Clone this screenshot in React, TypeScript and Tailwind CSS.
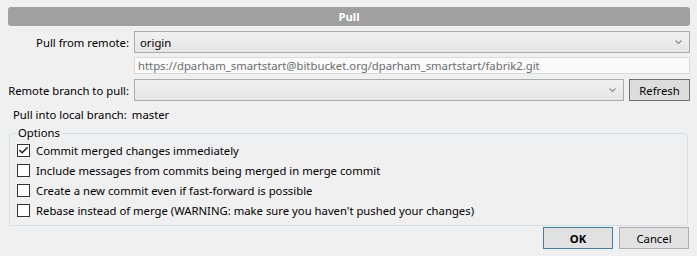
import { Check } from "lucide-react";

const font = { fontFamily: '"Noto Sans", "Liberation Sans", sans-serif' };

function Chevron() {
  return (
    <svg width="9" height="6" viewBox="0 0 9 6" className="shrink-0">
      <path d="M1.5 1.5 L4.5 4.5 L7.5 1.5" fill="none" stroke="#8a8a8a" strokeWidth="1.1" />
    </svg>
  );
}

function Combo({ value }: { value?: string }) {
  return (
    <div className="flex h-[22px] flex-1 items-center justify-between border border-[#acacac] bg-gradient-to-b from-[#f2f2f2] to-[#e5e5e5] pl-[5px] pr-[6px]">
      <span className="text-black">{value}</span>
      <Chevron />
    </div>
  );
}

function CheckRow({ label, checked }: { label: string; checked?: boolean }) {
  return (
    <div className="flex h-[20px] items-center gap-[6px]">
      <div className="flex h-[13px] w-[13px] shrink-0 items-center justify-center border border-[#333] bg-white">
        {checked && <Check className="h-[11px] w-[11px] text-[#222]" strokeWidth={3.5} />}
      </div>
      <span className="whitespace-nowrap">{label}</span>
    </div>
  );
}

export default function App() {
  return (
    <div
      className="h-[256px] w-[697px] overflow-hidden bg-[#f0f0f0] pl-[8px] pr-[7px] pt-[7px] text-[11.3px] leading-[15px] text-black"
      style={font}
    >
      {/* Header */}
      <div className="flex h-[19px] items-center justify-center rounded-[3px] bg-[#a0a0a0] font-bold text-white">
        Pull
      </div>

      {/* Fields */}
      <div className="mt-[5px] grid grid-cols-[121px_1fr] items-center gap-x-[5px]">
        <div className="whitespace-nowrap text-right">Pull from remote:</div>
        <Combo value="origin" />

        <div />
        <div className="mt-[4px] flex h-[17px] items-center border border-[#dadada] bg-[#fafafa] pl-[3px] text-[#6d6d6d]">
          https://dparham_smartstart@bitbucket.org/dparham_smartstart/fabrik2.git
        </div>

        <div className="mt-[5px] whitespace-nowrap text-right">Remote branch to pull:</div>
        <div className="mt-[5px] flex gap-[5px]">
          <Combo />
          <button className="h-[22px] w-[61px] border border-[#707070] bg-[#dddddd]">Refresh</button>
        </div>
      </div>

      <div className="mt-[5px] flex h-[17px] items-center pl-[5px]">
        <span>Pull into local branch:</span>
        <span className="ml-[5px]">master</span>
      </div>

      {/* Options group */}
      <div className="relative mr-[2px] ml-[1px] mt-[10px] h-[93px] rounded-[3px] border border-[#d5dfe5] px-[7px] pt-[6px]">
        <span className="absolute -top-[9px] left-[6px] bg-[#f0f0f0] px-[2px]">Options</span>
        <CheckRow label="Commit merged changes immediately" checked />
        <CheckRow label="Include messages from commits being merged in merge commit" />
        <CheckRow label="Create a new commit even if fast-forward is possible" />
        <CheckRow label="Rebase instead of merge (WARNING: make sure you haven't pushed your changes)" />
      </div>

      {/* Buttons */}
      <div className="mt-[1px] flex justify-end gap-[6px] pr-[1px]">
        <button className="h-[22px] w-[70px] border border-[#3c7fb1] bg-[#e1e1e1] font-bold">OK</button>
        <button className="h-[22px] w-[70px] border border-[#adadad] bg-[#e1e1e1]">Cancel</button>
      </div>
    </div>
  );
}
